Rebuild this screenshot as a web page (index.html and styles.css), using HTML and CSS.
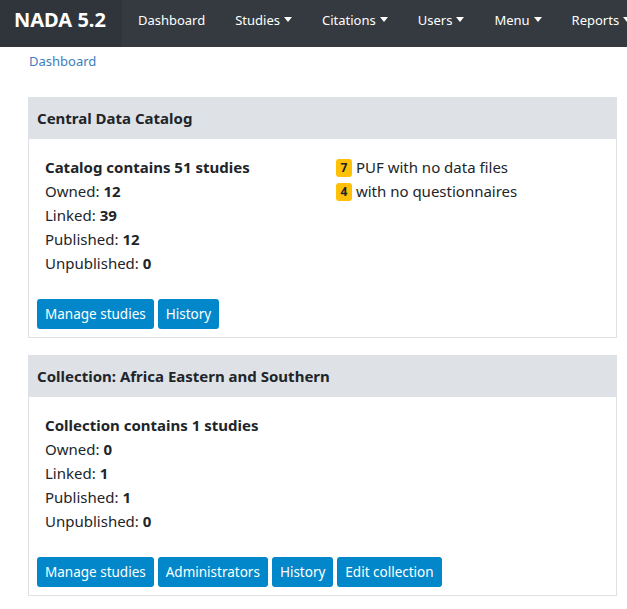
FILE: index.html
```html
<!DOCTYPE html>
<html lang="en">
<head>
    <meta charset="UTF-8">
    <meta name="viewport" content="width=device-width, initial-scale=1.0">
    <title>NADA 5.2 - Dashboard</title>
    <link rel="stylesheet" href="styles.css">
</head>
<body>

    <nav class="navbar">
        <a class="brand" href="#">NADA 5.2</a>
        <ul class="nav-links">
            <li><a href="#">Dashboard</a></li>
            <li><a class="dropdown" href="#">Studies</a></li>
            <li><a class="dropdown" href="#">Citations</a></li>
            <li><a class="dropdown" href="#">Users</a></li>
            <li><a class="dropdown" href="#">Menu</a></li>
            <li><a class="dropdown" href="#">Reports</a></li>
        </ul>
    </nav>

    <div class="breadcrumb"><a href="#">Dashboard</a></div>

    <div class="content">
        <div class="card">
            <div class="card-header">Central Data Catalog</div>
            <div class="card-body">
                <div class="col">
                    <div class="stat-title">Catalog contains 51 studies</div>
                    <div class="stat">Owned: <b>12</b></div>
                    <div class="stat">Linked: <b>39</b></div>
                    <div class="stat">Published: <b>12</b></div>
                    <div class="stat">Unpublished: <b>0</b></div>
                </div>
                <div class="col">
                    <div class="stat"><span class="badge">7</span> PUF with no data files</div>
                    <div class="stat"><span class="badge">4</span> with no questionnaires</div>
                </div>
            </div>
            <div class="card-actions">
                <a class="btn" href="#">Manage studies</a>
                <a class="btn" href="#">History</a>
            </div>
        </div>

        <div class="card">
            <div class="card-header">Collection: Africa Eastern and Southern</div>
            <div class="card-body">
                <div class="col">
                    <div class="stat-title">Collection contains 1 studies</div>
                    <div class="stat">Owned: <b>0</b></div>
                    <div class="stat">Linked: <b>1</b></div>
                    <div class="stat">Published: <b>1</b></div>
                    <div class="stat">Unpublished: <b>0</b></div>
                </div>
            </div>
            <div class="card-actions">
                <a class="btn" href="#">Manage studies</a>
                <a class="btn" href="#">Administrators</a>
                <a class="btn" href="#">History</a>
                <a class="btn" href="#">Edit collection</a>
            </div>
        </div>
    </div>

</body>
</html>
```

FILE: styles.css
```css
body {
    margin: 0;
    font-family: 'Noto Sans', 'Open Sans', sans-serif;
    font-size: 15px;
    color: #212529;
    background: #fff;
}

a {
    text-decoration: none;
}

.navbar {
    display: flex;
    height: 47px;
    background-color: #343a40;
    overflow: hidden;
    white-space: nowrap;
}

.brand {
    display: block;
    height: 100%;
    padding: 7px 16px 0 14px;
    line-height: 26px;
    font-size: 20px;
    font-weight: bold;
    color: #fff;
    background-color: #30353b;
    box-sizing: border-box;
    width: 122px;
}

.nav-links {
    display: flex;
    margin: 0;
    padding: 0 0 0 1px;
    list-style: none;
}

.nav-links a {
    display: block;
    padding: 10px 15px 0;
    line-height: 20px;
    color: #fff;
    font-size: 13px;
}

.dropdown::after {
    content: '';
    display: inline-block;
    margin-left: 4px;
    vertical-align: 3px;
    border-top: 5px solid #fff;
    border-left: 4.5px solid transparent;
    border-right: 4.5px solid transparent;
}

.breadcrumb {
    padding: 6px 29px 0;
    font-size: 13px;
    line-height: 16px;
}

.breadcrumb a {
    color: #3d7dbd;
}

.content {
    padding: 28px 10px 0 28px;
}

.card {
    border: 1px solid #dee2e6;
    margin-bottom: 17px;
}

.card-header {
    background-color: #dee2e6;
    padding: 0 9px;
    height: 42px;
    line-height: 42px;
    margin: -1px -1px 0;
    font-weight: bold;
}

.card-body {
    display: flex;
    padding: 16px 16px 0;
}

.col {
    flex: 1;
}

.col:first-child {
    flex: 0 0 291px;
}

.stat-title {
    font-weight: bold;
    line-height: 24px;
}

.stat {
    line-height: 24px;
}

.badge {
    display: inline-block;
    min-width: 16px;
    height: 18px;
    line-height: 18px;
    padding: 0 2px;
    box-sizing: border-box;
    text-align: center;
    font-size: 12px;
    font-weight: bold;
    color: #212529;
    background-color: #ffc107;
    border-radius: 3px;
    vertical-align: 1px;
}

.card-actions {
    display: flex;
    gap: 4px;
    padding: 24px 8px 8px;
}

.btn {
    display: inline-block;
    height: 30px;
    line-height: 30px;
    padding: 0 8px;
    font-size: 13.5px;
    color: #fff;
    background-color: #0288ca;
    border-radius: 3px;
}
```
